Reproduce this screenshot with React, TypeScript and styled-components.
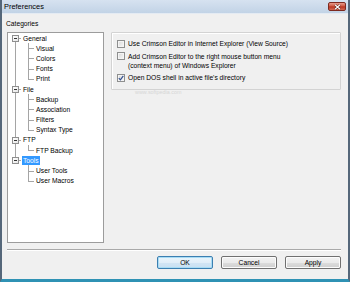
import React from "react";
import styled, { createGlobalStyle } from "styled-components";

const GlobalStyle = createGlobalStyle`
  html, body {
    margin: 0;
    padding: 0;
    overflow: hidden;
    background: #f0f0f0;
  }
  body {
    font-family: "Liberation Sans", Arial, sans-serif;
    font-size: 6.7px;
    color: #000;
  }
`;

const Window = styled.div`
  width: 350px;
  height: 282px;
  box-sizing: border-box;
  display: flex;
  flex-direction: column;
  background: #f0f0f0;
  border-left: 2px solid #55677a;
  border-right: 2px solid #55677a;
  border-bottom: 3px solid #2f92b4;
`;

const TitleBar = styled.div`
  height: 14px;
  flex: none;
  display: flex;
  align-items: center;
  justify-content: space-between;
  padding: 0 2px 0 2px;
  background: linear-gradient(#d6e2f0, #c2d3e6);
  border-bottom: 1px solid #e4ebf3;
  box-sizing: border-box;
`;

const Title = styled.span`
  font-size: 7.4px;
  color: #000;
`;

const CloseButton = styled.span`
  width: 18px;
  height: 9px;
  box-sizing: border-box;
  display: flex;
  align-items: center;
  justify-content: center;
  border: 1px solid #7d2a20;
  border-radius: 2px;
  background: linear-gradient(#e8998a, #cc5640 48%, #b9321f 52%, #d26a55);
`;

const Body = styled.div`
  flex: 1;
  display: flex;
  flex-direction: column;
  padding: 6px 7px 0 5px;
`;

const GroupLabel = styled.div`
  height: 8px;
  line-height: 8px;
  margin-left: -1px;
`;

const Main = styled.div`
  display: flex;
  gap: 7px;
  margin-top: 4px;
`;

const TreeBox = styled.div`
  width: 97px;
  height: 211px;
  box-sizing: border-box;
  background: #fff;
  border: 1px solid #9c9c9c;
  overflow: hidden;
`;

const Row = styled.div`
  height: 10.2px;
  display: flex;
  align-items: center;
`;

const Indent = styled.span<{ $line: boolean }>`
  position: relative;
  width: 13px;
  height: 100%;
  flex: none;
  &::before {
    content: "";
    display: ${(p) => (p.$line ? "block" : "none")};
    position: absolute;
    left: 7px;
    width: 1px;
    top: 0;
    bottom: 0;
    background: #a5a5a5;
  }
`;

const Connector = styled.span<{ $top: boolean; $bottom: boolean }>`
  position: relative;
  width: 13px;
  height: 100%;
  flex: none;
  &::before {
    content: "";
    position: absolute;
    left: 7px;
    width: 1px;
    top: ${(p) => (p.$top ? "0" : "50%")};
    bottom: ${(p) => (p.$bottom ? "0" : "50%")};
    background: #a5a5a5;
  }
  &::after {
    content: "";
    position: absolute;
    left: 7px;
    right: 0;
    top: 50%;
    height: 1px;
    background: #a5a5a5;
  }
`;

const Expander = styled.span`
  position: absolute;
  z-index: 1;
  left: 4px;
  top: calc(50% - 3px);
  width: 7px;
  height: 7px;
  box-sizing: border-box;
  border: 1px solid #8f8f8f;
  background: linear-gradient(135deg, #fff, #e6e6e6);
  &::after {
    content: "";
    position: absolute;
    left: 1px;
    top: 2px;
    width: 3px;
    height: 1px;
    background: #333;
  }
`;

const NodeLabel = styled.span<{ $selected?: boolean }>`
  margin-left: 1px;
  padding: 0 1px;
  height: 9px;
  line-height: 9px;
  white-space: nowrap;
  background: ${(p) => (p.$selected ? "#3399ff" : "transparent")};
  color: ${(p) => (p.$selected ? "#fff" : "#000")};
`;

const RightColumn = styled.div`
  display: flex;
  flex-direction: column;
`;

const OptionsBox = styled.div`
  width: 230px;
  height: 58px;
  box-sizing: border-box;
  border: 1px solid #d3d3d3;
  box-shadow: inset 1px 1px 0 #fff;
  border-radius: 1px;
  padding: 6px 5px 0 5px;
  display: flex;
  flex-direction: column;
  gap: 3.3px;
`;

const Option = styled.label`
  display: flex;
  align-items: flex-start;
  gap: 3px;
  line-height: 9.3px;
`;

const Check = styled.span`
  width: 8px;
  height: 8px;
  margin-top: 0.7px;
  flex: none;
  box-sizing: border-box;
  border: 1px solid #8e8f8f;
  background: linear-gradient(135deg, #d8d8d8, #f8f8f8);
  box-shadow: inset 0 0 0 1px #f4f4f4;
  display: flex;
  align-items: center;
  justify-content: center;
`;

const SiteMark = styled.div`
  margin-top: -1px;
  padding-left: 24px;
  font-size: 5.4px;
  color: #d6d6d6;
`;

const Separator = styled.div`
  margin-top: 6px;
  height: 0;
  border-top: 1px solid #a9a9a9;
  border-bottom: 1px solid #fff;
`;

const ButtonRow = styled.div`
  margin-top: 5px;
  display: flex;
  justify-content: flex-end;
  gap: 8px;
`;

const Button = styled.button<{ $default?: boolean }>`
  width: 56px;
  height: 13px;
  padding: 0;
  font-family: inherit;
  font-size: 6.7px;
  color: #000;
  border-radius: 2px;
  border: 1px solid ${(p) => (p.$default ? "#3c7fb1" : "#707070")};
  background: ${(p) =>
    p.$default
      ? "linear-gradient(#eaf5fc, #e1eef8 50%, #d2e5f4 51%, #c9e0f2)"
      : "linear-gradient(#f2f2f2, #ebebeb 50%, #dddddd 51%, #cfcfcf)"};
  box-shadow: inset 0 0 0 1px ${(p) => (p.$default ? "#a8dcf5" : "#fcfcfc")};
`;

const tree = [
  { label: "General", children: ["Visual", "Colors", "Fonts", "Print"] },
  { label: "File", children: ["Backup", "Association", "Filters", "Syntax Type"] },
  { label: "FTP", children: ["FTP Backup"] },
  { label: "Tools", children: ["User Tools", "User Macros"], selected: true },
];

const options = [
  { lines: ["Use Crimson Editor in Internet Explorer (View Source)"], checked: false },
  {
    lines: ["Add Crimson Editor to the right mouse button menu", "(context menu) of Windows Explorer"],
    checked: false,
  },
  { lines: ["Open DOS shell in active file's directory"], checked: true },
];

const CategoryTree = () => (
  <TreeBox>
    {tree.map((node, i) => {
      const lastRoot = i === tree.length - 1;
      return (
        <React.Fragment key={node.label}>
          <Row>
            <Connector $top={i > 0} $bottom={!lastRoot}>
              <Expander />
            </Connector>
            <NodeLabel $selected={node.selected}>{node.label}</NodeLabel>
          </Row>
          {node.children.map((child, j) => (
            <Row key={child}>
              <Indent $line={!lastRoot} />
              <Connector $top $bottom={j < node.children.length - 1} />
              <NodeLabel>{child}</NodeLabel>
            </Row>
          ))}
        </React.Fragment>
      );
    })}
  </TreeBox>
);

const App = () => {
  return (
    <>
      <GlobalStyle />
      <Window>
        <TitleBar>
          <Title>Preferences</Title>
          <CloseButton>
            <svg width="7" height="6" viewBox="0 0 7 6">
              <path d="M1 0.8 L6 5.2 M6 0.8 L1 5.2" stroke="#5a1f18" strokeWidth="2.2" />
              <path d="M1 0.8 L6 5.2 M6 0.8 L1 5.2" stroke="#fff" strokeWidth="1.2" />
            </svg>
          </CloseButton>
        </TitleBar>
        <Body>
          <GroupLabel>Categories</GroupLabel>
          <Main>
            <CategoryTree />
            <RightColumn>
              <OptionsBox>
                {options.map((opt) => (
                  <Option key={opt.lines[0]}>
                    <Check>
                      {opt.checked && (
                        <svg width="6" height="6" viewBox="0 0 6 6">
                          <path d="M0.8 3.1 L2.4 4.8 L5.3 0.9" fill="none" stroke="#34508f" strokeWidth="1.2" />
                        </svg>
                      )}
                    </Check>
                    <span>
                      {opt.lines.map((line) => (
                        <div key={line}>{line}</div>
                      ))}
                    </span>
                  </Option>
                ))}
              </OptionsBox>
              <SiteMark>www.softpedia.com</SiteMark>
            </RightColumn>
          </Main>
          <Separator />
          <ButtonRow>
            <Button $default>OK</Button>
            <Button>Cancel</Button>
            <Button>Apply</Button>
          </ButtonRow>
        </Body>
      </Window>
    </>
  );
};

export default App;
